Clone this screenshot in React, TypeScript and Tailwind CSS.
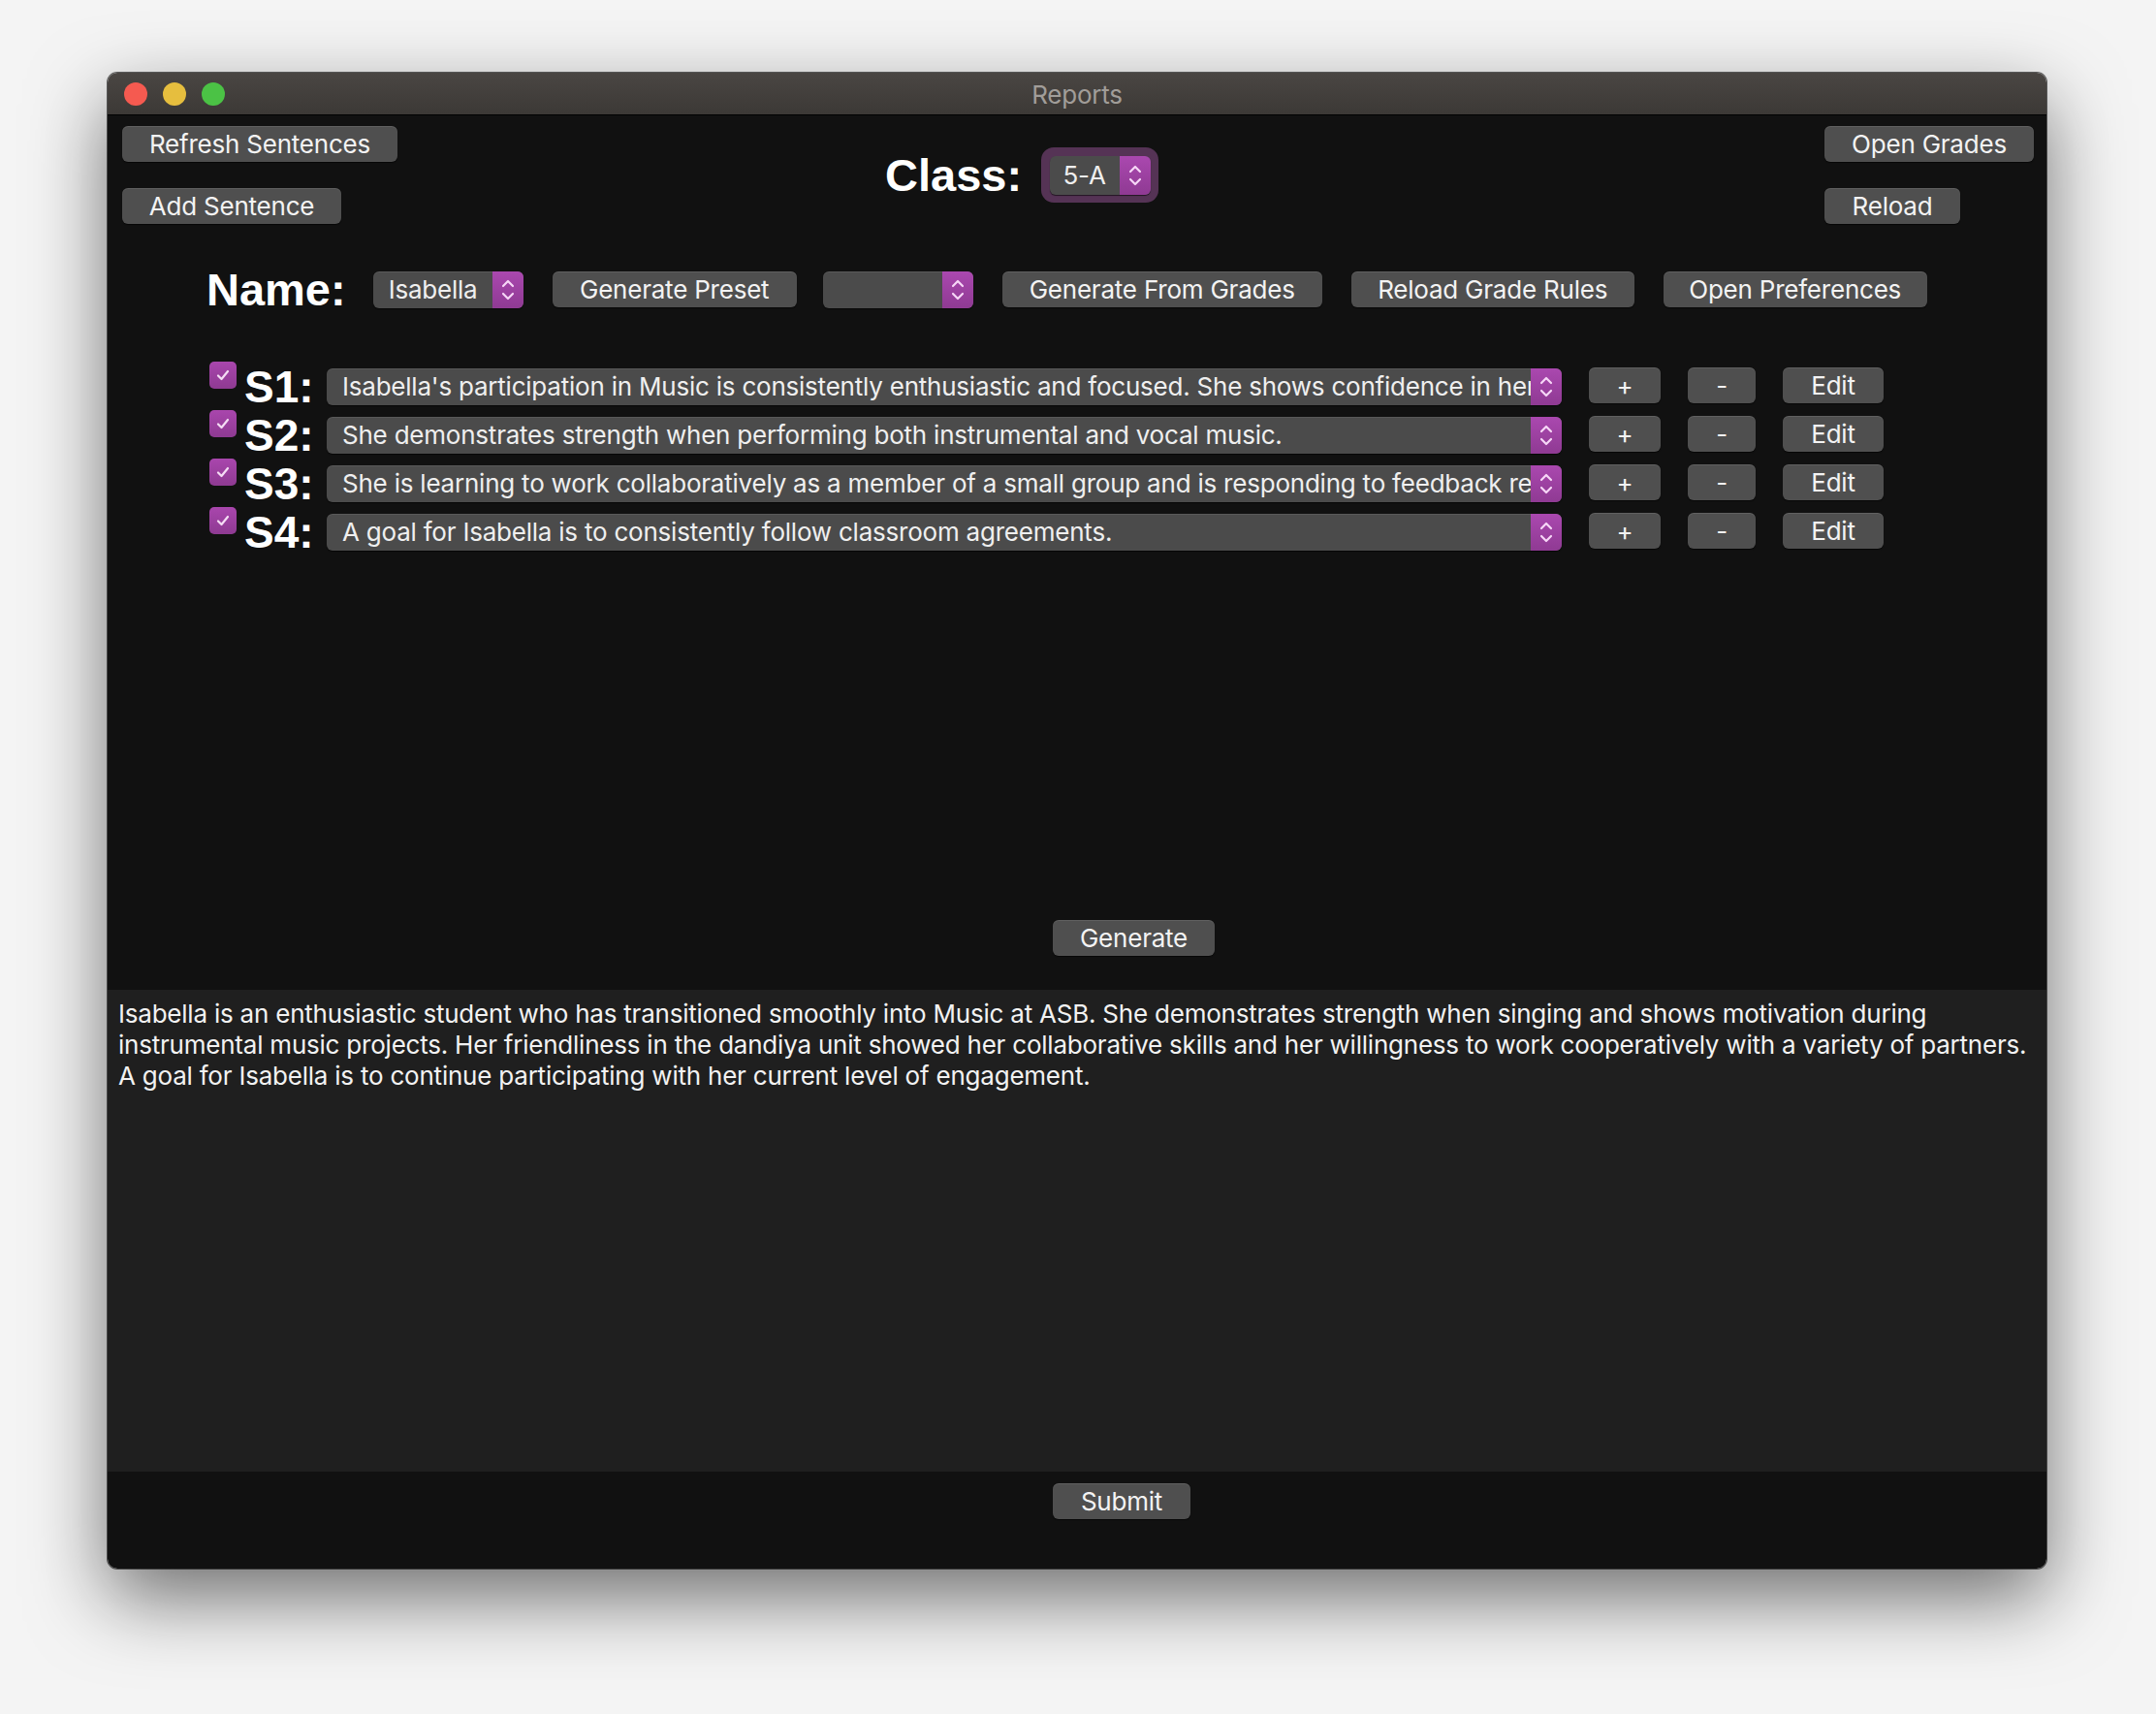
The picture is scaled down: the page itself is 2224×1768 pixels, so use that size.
import React from "react";

const UI = "[font-family:Inter,'Noto_Sans',sans-serif] tracking-[-0.22px]";
const BOLD = "[font-family:'Liberation_Sans',Arial,sans-serif] font-bold";

function Btn({ children, className = "" }: { children: React.ReactNode; className?: string }) {
  return (
    <div
      className={`h-[37px] shrink-0 rounded-[6px] bg-[#4f4f4f] text-[26px] leading-none text-[#f3f3f3] flex items-center justify-center shadow-[inset_0_1px_0_rgba(255,255,255,0.10),0_1px_1px_rgba(0,0,0,0.6)] ${UI} ${className}`}
    >
      {children}
    </div>
  );
}

function Chevrons() {
  return (
    <svg width="14" height="26" viewBox="0 0 14 26" fill="none">
      <path d="M2 9 L7 4 L12 9" stroke="#f6d6f6" strokeWidth="2.2" strokeLinecap="round" strokeLinejoin="round" />
      <path d="M2 17 L7 22 L12 17" stroke="#f6d6f6" strokeWidth="2.2" strokeLinecap="round" strokeLinejoin="round" />
    </svg>
  );
}

function Popup({ text, className = "", pl = "pl-[16px]" }: { text?: string; className?: string; pl?: string }) {
  return (
    <div
      className={`h-[38px] shrink-0 rounded-[6px] bg-[#4b4b4b] flex overflow-hidden shadow-[inset_0_1px_0_rgba(255,255,255,0.08),0_1px_1px_rgba(0,0,0,0.6)] ${className}`}
    >
      <div className={`flex-1 min-w-0 overflow-hidden whitespace-nowrap text-[26px] leading-none text-[#efefef] flex items-center ${pl} ${UI}`}>
        {text}
      </div>
      <div className="w-[32px] shrink-0 bg-linear-to-b from-[#aa48af] to-[#8f3a93] flex items-center justify-center">
        <Chevrons />
      </div>
    </div>
  );
}

function Check() {
  return (
    <div className="w-[28px] h-[28px] shrink-0 rounded-[5px] bg-linear-to-b from-[#a946ad] to-[#8e3a92] flex items-center justify-center">
      <svg width="18" height="18" viewBox="0 0 18 18" fill="none">
        <path d="M4 9.5 L7.5 13 L14 5" stroke="#f4dcf4" strokeWidth="2.2" strokeLinecap="round" strokeLinejoin="round" />
      </svg>
    </div>
  );
}

const sentences = [
  { label: "S1:", text: "Isabella's participation in Music is consistently enthusiastic and focused. She shows confidence in her ability to perform." },
  { label: "S2:", text: "She demonstrates strength when performing both instrumental and vocal music." },
  { label: "S3:", text: "She is learning to work collaboratively as a member of a small group and is responding to feedback respectfully." },
  { label: "S4:", text: "A goal for Isabella is to consistently follow classroom agreements." },
];

export default function App() {
  return (
    <div className="w-[2224px] h-[1768px] bg-[#f4f4f4] overflow-hidden">
      <div className="ml-[111px] mt-[75px] w-[2000px] h-[1543px] rounded-[10px] overflow-hidden flex flex-col shadow-[0_30px_80px_rgba(0,0,0,0.55),0_0_0_1px_rgba(0,0,0,0.6)]">
        {/* Title bar */}
        <div className="h-[44px] shrink-0 bg-linear-to-b from-[#4a4643] to-[#3c3936] border-b border-black flex items-center relative">
          <div className="flex items-center gap-[16px] pl-[17px]">
            <div className="w-[24px] h-[24px] rounded-full bg-[#f55a50]" />
            <div className="w-[24px] h-[24px] rounded-full bg-[#e6be3e]" />
            <div className="w-[24px] h-[24px] rounded-full bg-[#4bc245]" />
          </div>
          <div className={`absolute inset-0 pt-[2px] flex items-center justify-center text-[26px] text-[#a19d99] ${UI}`}>Reports</div>
        </div>

        {/* Top content */}
        <div className="h-[902px] shrink-0 bg-[#111111] flex flex-col">
          {/* header */}
          <div className="flex items-start pl-[15px] pr-[13px] pt-[11px]">
            <div className="flex flex-col gap-[27px] w-[284px]">
              <Btn className="w-[284px]">Refresh Sentences</Btn>
              <Btn className="w-[226px]">Add Sentence</Btn>
            </div>
            <div className="ml-[503px] mt-[22px] flex items-center">
              <div className={`text-[47px] leading-none text-white ${BOLD}`}>Class:</div>
              <div className="ml-[20px] h-[57px] w-[121px] rounded-[13px] bg-[#553355] flex items-center justify-center">
                <div className="h-[40px] w-[104px] rounded-[6px] bg-[#4b4b4b] flex overflow-hidden shadow-[0_1px_1px_rgba(0,0,0,0.6)]">
                  <div className={`flex-1 flex items-center justify-center text-[26px] leading-none text-[#efefef] ${UI}`}>5-A</div>
                  <div className="w-[32px] bg-linear-to-b from-[#aa48af] to-[#8f3a93] flex items-center justify-center">
                    <Chevrons />
                  </div>
                </div>
              </div>
            </div>
            <div className="ml-auto flex flex-col gap-[27px] w-[216px]">
              <Btn className="w-[216px]">Open Grades</Btn>
              <Btn className="w-[140px]">Reload</Btn>
            </div>
          </div>

          {/* name row */}
          <div className="flex items-center pl-[102px] mt-[48px] h-[39px]">
            <div className={`text-[47px] leading-none text-white ${BOLD}`}>Name:</div>
            <Popup text="Isabella" className="ml-[28px] w-[155px]" pl="pl-[16px]" />
            <Btn className="ml-[30px] w-[252px]">Generate Preset</Btn>
            <Popup className="ml-[27px] w-[155px]" />
            <Btn className="ml-[30px] w-[330px]">Generate From Grades</Btn>
            <Btn className="ml-[30px] w-[292px]">Reload Grade Rules</Btn>
            <Btn className="ml-[30px] w-[272px]">Open Preferences</Btn>
          </div>

          {/* sentences */}
          <div className="flex flex-col pl-[105px] mt-[55px]">
            {sentences.map((s) => (
              <div key={s.label} className="flex items-start h-[50px]">
                <Check />
                <div className={`ml-[8px] mt-[3px] w-[68px] text-[46px] leading-none text-white ${BOLD}`}>{s.label}</div>
                <Popup text={s.text} className="ml-[17px] mt-[7px] w-[1274px]" />
                <Btn className="ml-[28px] mt-[6px] w-[74px]">+</Btn>
                <Btn className="ml-[28px] mt-[6px] w-[70px]">-</Btn>
                <Btn className="ml-[28px] mt-[6px] w-[104px]">Edit</Btn>
              </div>
            ))}
          </div>

          <div className="flex-1" />
          <div className="pl-[975px] pb-[35px]">
            <Btn className="w-[167px]">Generate</Btn>
          </div>
        </div>

        {/* Text area */}
        <div className={`h-[497px] shrink-0 bg-[#1f1f1f] pl-[11px] pr-[4px] pt-[9px] text-[26px] leading-[32px] text-[#f2f2f2] ${UI}`}>
          Isabella is an enthusiastic student who has transitioned smoothly into Music at ASB. She demonstrates strength when singing and shows motivation during instrumental music projects. Her friendliness in the dandiya unit showed her collaborative skills and her willingness to work cooperatively with a variety of partners. A goal for Isabella is to continue participating with her current level of engagement.
        </div>

        {/* Bottom */}
        <div className="flex-1 bg-[#111111] pl-[975px] pt-[12px]">
          <Btn className="w-[142px]">Submit</Btn>
        </div>
      </div>
    </div>
  );
}
